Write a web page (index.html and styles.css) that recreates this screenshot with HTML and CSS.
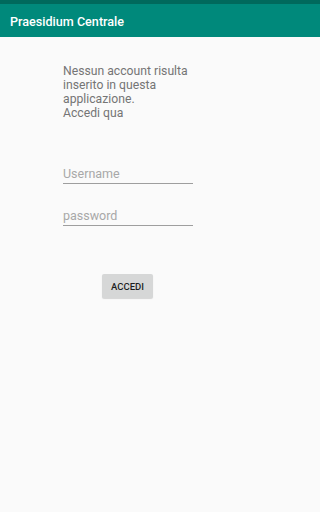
FILE: index.html
```html
<!DOCTYPE html>
<html>
<head>
<meta charset="utf-8">
<link rel="stylesheet" href="styles.css">
</head>
<body>
<div class="status"></div>
<header class="appbar">Praesidium Centrale</header>
<main class="content">
  <p class="intro">Nessun account risulta<br>inserito in questa<br>applicazione.<br>Accedi qua</p>
  <div class="field"><span class="hint">Username</span></div>
  <div class="field second"><span class="hint">password</span></div>
  <div class="btnrow"><button class="btn">ACCEDI</button></div>
</main>
</body>
</html>
```
FILE: styles.css
```css
html, body {
  margin: 0;
  padding: 0;
  background: #fafafa;
  font-family: Roboto, "Noto Sans", sans-serif;
  height: 512px;
  overflow: hidden;
}
.status {
  height: 4px;
  background: #00695c;
}
.appbar {
  height: 33px;
  background: #00897b;
  color: #fff;
  font-size: 12.6px;
  font-weight: 500;
  padding-left: 10px;
  padding-top: 1px;
  line-height: 33px;
  box-sizing: border-box;
}
.content {
  padding-left: 63px;
}
.intro {
  margin: 27px 0 0 0;
  font-size: 12.2px;
  line-height: 14px;
  color: #757575;
}
.field {
  width: 130px;
  height: 19px;
  line-height: 16px;
  border-bottom: 1px solid #9e9e9e;
  margin-top: 45px;
  box-sizing: border-box;
}
.field.second {
  margin-top: 23px;
}
.hint {
  font-size: 12.5px;
  color: #a8a8a8;
}
.btnrow {
  margin-top: 48px;
  padding-left: 39px;
}
.btn {
  display: block;
  width: 51px;
  height: 24px;
  border: none;
  border-radius: 2px;
  background: #d6d7d7;
  color: #1f1f1f;
  font-family: Roboto, sans-serif;
  font-size: 9.5px;
  font-weight: 500;
  padding: 0;
  box-shadow: 0 1px 1px rgba(0,0,0,0.15);
}
```
